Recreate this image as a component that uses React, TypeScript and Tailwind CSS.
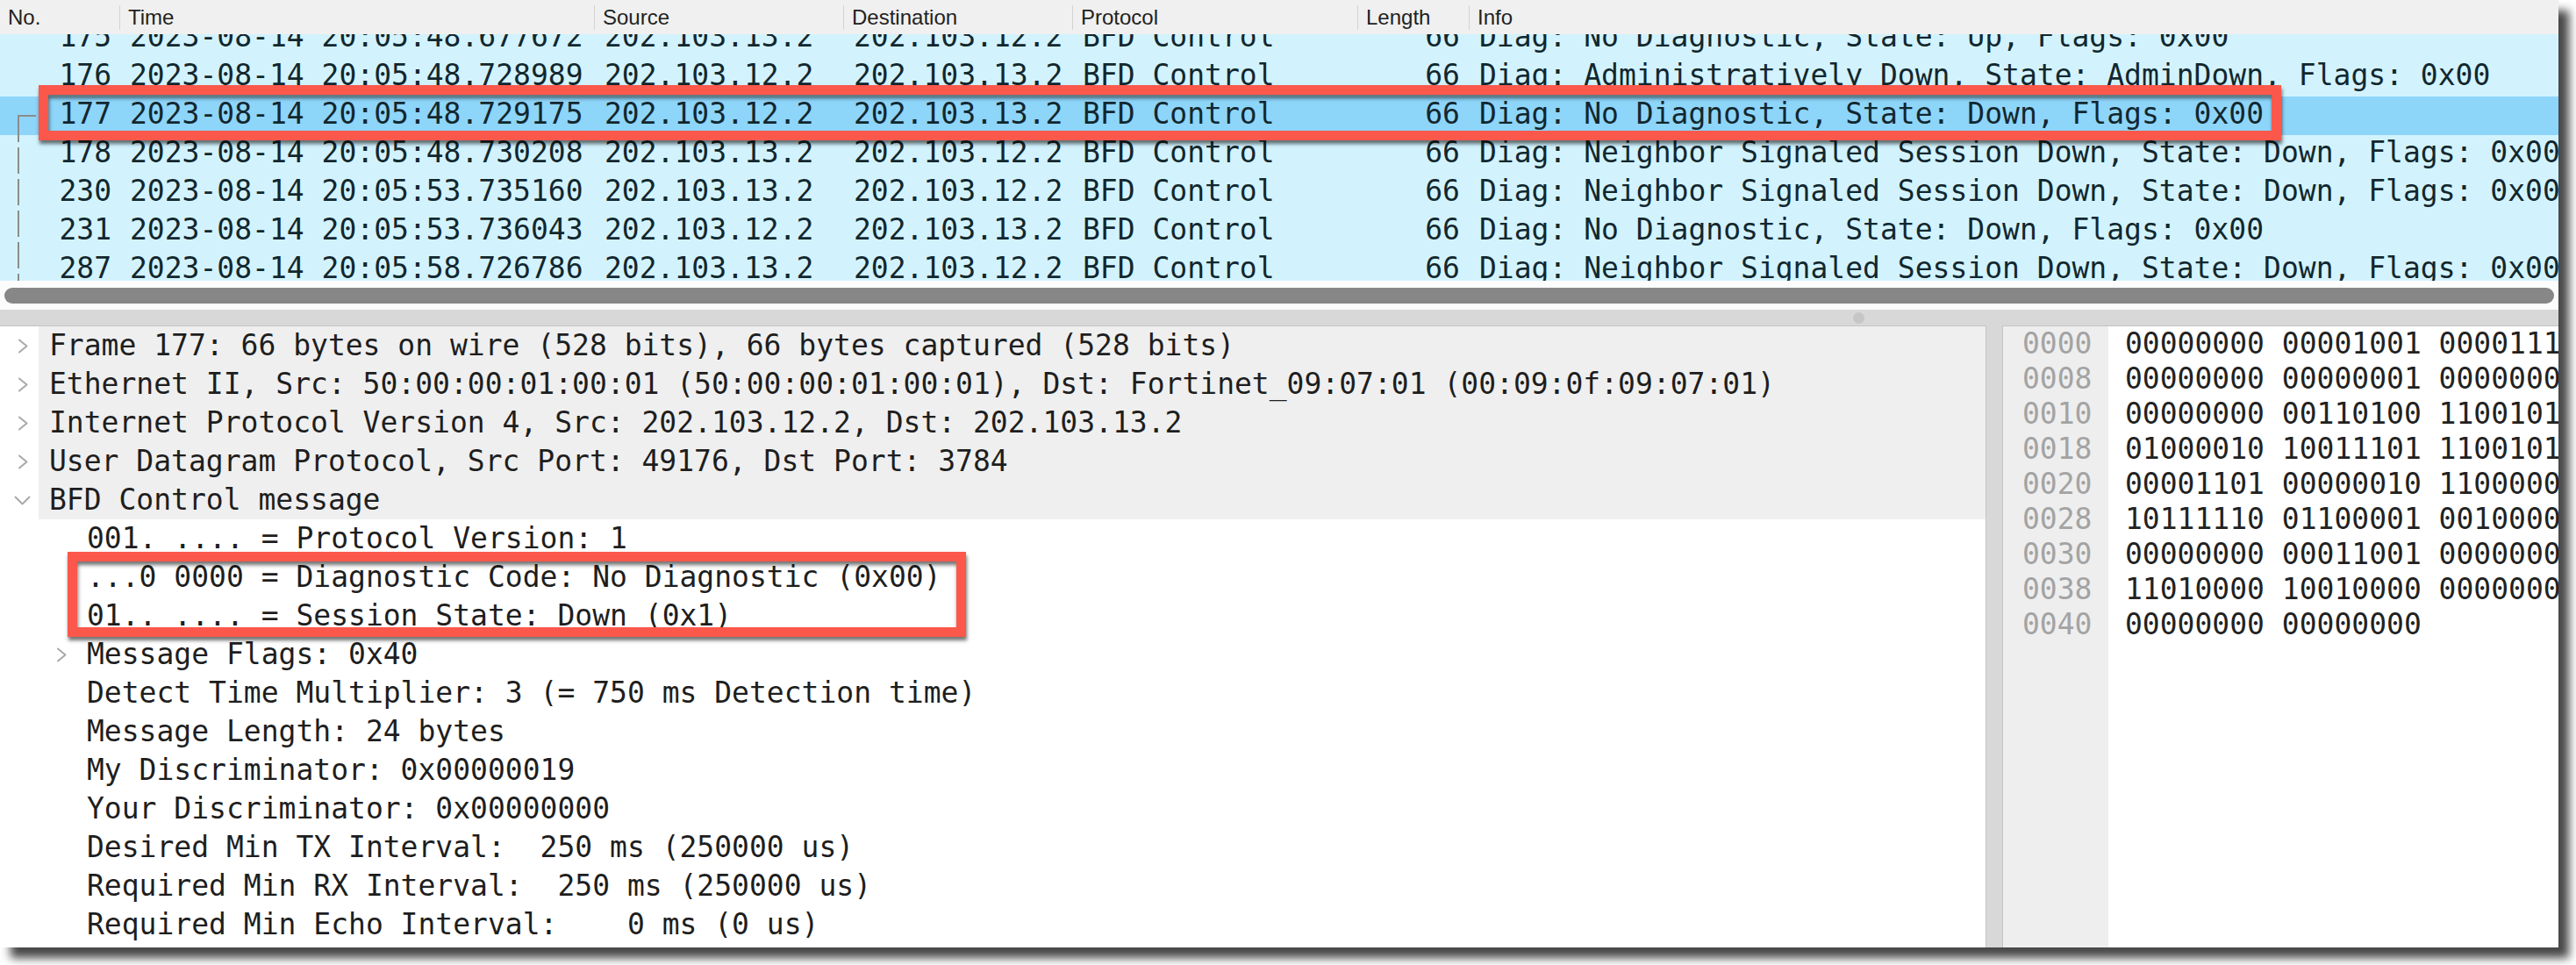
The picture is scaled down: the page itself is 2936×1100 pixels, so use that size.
import React from 'react';

type Packet = {
  no: string;
  time: string;
  src: string;
  dst: string;
  proto: string;
  len: string;
  info: string;
  selected?: boolean;
};

type TreeItem = {
  text: string;
  level: 0 | 1;
  arrow?: 'right' | 'down';
};

const packets: Packet[] = [
  { no: '175', time: '2023-08-14 20:05:48.677672', src: '202.103.13.2', dst: '202.103.12.2', proto: 'BFD Control', len: '66', info: 'Diag: No Diagnostic, State: Up, Flags: 0x00' },
  { no: '176', time: '2023-08-14 20:05:48.728989', src: '202.103.12.2', dst: '202.103.13.2', proto: 'BFD Control', len: '66', info: 'Diag: Administratively Down, State: AdminDown, Flags: 0x00' },
  { no: '177', time: '2023-08-14 20:05:48.729175', src: '202.103.12.2', dst: '202.103.13.2', proto: 'BFD Control', len: '66', info: 'Diag: No Diagnostic, State: Down, Flags: 0x00', selected: true },
  { no: '178', time: '2023-08-14 20:05:48.730208', src: '202.103.13.2', dst: '202.103.12.2', proto: 'BFD Control', len: '66', info: 'Diag: Neighbor Signaled Session Down, State: Down, Flags: 0x00' },
  { no: '230', time: '2023-08-14 20:05:53.735160', src: '202.103.13.2', dst: '202.103.12.2', proto: 'BFD Control', len: '66', info: 'Diag: Neighbor Signaled Session Down, State: Down, Flags: 0x00' },
  { no: '231', time: '2023-08-14 20:05:53.736043', src: '202.103.12.2', dst: '202.103.13.2', proto: 'BFD Control', len: '66', info: 'Diag: No Diagnostic, State: Down, Flags: 0x00' },
  { no: '287', time: '2023-08-14 20:05:58.726786', src: '202.103.13.2', dst: '202.103.12.2', proto: 'BFD Control', len: '66', info: 'Diag: Neighbor Signaled Session Down, State: Down, Flags: 0x00' },
];

const tree: TreeItem[] = [
  { text: 'Frame 177: 66 bytes on wire (528 bits), 66 bytes captured (528 bits)', level: 0, arrow: 'right' },
  { text: 'Ethernet II, Src: 50:00:00:01:00:01 (50:00:00:01:00:01), Dst: Fortinet_09:07:01 (00:09:0f:09:07:01)', level: 0, arrow: 'right' },
  { text: 'Internet Protocol Version 4, Src: 202.103.12.2, Dst: 202.103.13.2', level: 0, arrow: 'right' },
  { text: 'User Datagram Protocol, Src Port: 49176, Dst Port: 3784', level: 0, arrow: 'right' },
  { text: 'BFD Control message', level: 0, arrow: 'down' },
  { text: '001. .... = Protocol Version: 1', level: 1 },
  { text: '...0 0000 = Diagnostic Code: No Diagnostic (0x00)', level: 1 },
  { text: '01.. .... = Session State: Down (0x1)', level: 1 },
  { text: 'Message Flags: 0x40', level: 1, arrow: 'right' },
  { text: 'Detect Time Multiplier: 3 (= 750 ms Detection time)', level: 1 },
  { text: 'Message Length: 24 bytes', level: 1 },
  { text: 'My Discriminator: 0x00000019', level: 1 },
  { text: 'Your Discriminator: 0x00000000', level: 1 },
  { text: 'Desired Min TX Interval:  250 ms (250000 us)', level: 1 },
  { text: 'Required Min RX Interval:  250 ms (250000 us)', level: 1 },
  { text: 'Required Min Echo Interval:    0 ms (0 us)', level: 1 },
];

const bytes: [string, string][] = [
  ['0000', '00000000 00001001 00001111 00001001 00000111 00000001 01010000 00000000'],
  ['0008', '00000000 00000001 00000000 00000001 00001000 00000000 01000101 11000000'],
  ['0010', '00000000 00110100 11001010 01100111 00000000 00000000 11111111 00010001'],
  ['0018', '01000010 10011101 11001010 01100111 00001100 00000010 11001010 01100111'],
  ['0020', '00001101 00000010 11000000 00011000 00001110 11001000 00000000 00100000'],
  ['0028', '10111110 01100001 00100000 01000000 00000011 00011000 00000000 00000000'],
  ['0030', '00000000 00011001 00000000 00000000 00000000 00000000 00000000 00000011'],
  ['0038', '11010000 10010000 00000000 00000011 11010000 10010000 00000000 00000000'],
  ['0040', '00000000 00000000'],
];

const mono = "font-['DejaVu_Sans_Mono','Liberation_Mono',monospace]";

const ChevronRight = () => (
  <svg width="13" height="17" viewBox="0 0 13 17" fill="none">
    <polyline points="2,1.5 10.5,8.5 2,15.5" stroke="#a9a9a9" strokeWidth="2" strokeLinejoin="round" strokeLinecap="round" />
  </svg>
);

const ChevronDown = () => (
  <svg width="19" height="11" viewBox="0 0 19 11" fill="none">
    <polyline points="1.5,1.5 9.5,9.5 17.5,1.5" stroke="#a9a9a9" strokeWidth="2" strokeLinejoin="round" strokeLinecap="round" />
  </svg>
);

const HeaderCell: React.FC<{ label: string; width?: string; first?: boolean }> = ({ label, width, first }) => (
  <div className={`flex items-center ${width ?? 'flex-1'}`}>
    {first ? null : <div className="w-px h-[28px] bg-[#d3d3d3] mr-[9px]" />}
    <span className={first ? 'pl-[9px]' : ''}>{label}</span>
  </div>
);

const PacketRow: React.FC<{ p: Packet }> = ({ p }) => (
  <div className={`flex h-[44px] leading-[40px] whitespace-pre ${p.selected ? 'bg-[#8ed5fa]' : 'bg-[#d2f3fe]'}`}>
    <div className="w-[136px] shrink-0 text-right pr-[9px]">{p.no}</div>
    <div className="w-[541px] shrink-0 pl-3">{p.time}</div>
    <div className="w-[284px] shrink-0 pl-3">{p.src}</div>
    <div className="w-[261px] shrink-0 pl-3">{p.dst}</div>
    <div className="w-[325px] shrink-0 pl-3">{p.proto}</div>
    <div className="w-[127px] shrink-0 text-right pr-[10px]">{p.len}</div>
    <div className="flex-1 min-w-0 pl-3">{p.info}</div>
  </div>
);

const TreeRow: React.FC<{ item: TreeItem }> = ({ item }) => {
  if (item.level === 0) {
    return (
      <div className="flex h-[44px]">
        <div className="w-[44px] shrink-0 flex items-center pl-[16px]">
          {item.arrow === 'down' ? <ChevronDown /> : <div className="pl-[4px]"><ChevronRight /></div>}
        </div>
        <div className="flex-1 bg-[#efefef] pl-[12px] leading-[43px] whitespace-pre">{item.text}</div>
      </div>
    );
  }
  return (
    <div className="flex h-[44px]">
      <div className="w-[99px] shrink-0 flex items-center pl-[64px]">
        {item.arrow === 'right' ? <ChevronRight /> : null}
      </div>
      <div className="flex-1 leading-[43px] whitespace-pre">{item.text}</div>
    </div>
  );
};

const RedBox: React.FC<{ className: string }> = ({ className }) => (
  <div
    className={`absolute border-[11px] border-[#fb584b] shadow-[1px_4px_4px_rgba(0,0,0,0.55),inset_1px_4px_4px_rgba(0,0,0,0.55)] ${className}`}
  />
);

export default function App() {
  return (
    <div className="w-[2936px] h-[1100px] bg-white overflow-hidden">
      <div className="relative w-[2916px] h-[1080px] bg-white flex flex-col shadow-[12px_12px_10px_rgba(0,0,0,0.72)]">
        {/* packet list header */}
        <div className="flex h-[39px] shrink-0 bg-[#f0f0f0] text-[24px] leading-[39px] text-[#222] font-['Liberation_Sans',Arial,sans-serif]">
          <HeaderCell label="No." width="w-[136px]" first />
          <HeaderCell label="Time" width="w-[541px]" />
          <HeaderCell label="Source" width="w-[284px]" />
          <HeaderCell label="Destination" width="w-[261px]" />
          <HeaderCell label="Protocol" width="w-[325px]" />
          <HeaderCell label="Length" width="w-[127px]" />
          <HeaderCell label="Info" />
        </div>

        {/* packet list, scrolled so that row 175 sits partly under the header */}
        <div className={`relative h-[281px] shrink-0 overflow-hidden bg-[#d2f3fe] text-[33px] text-[#12272e] ${mono}`}>
          <div className="-mt-[17px]">
            {packets.map((p) => (
              <PacketRow key={p.no} p={p} />
            ))}
          </div>
          <svg className="absolute left-0 top-0" width="44" height="281" viewBox="0 0 44 281">
            <polyline points="41,93 21,93 21,100" fill="none" stroke="#8c8c8c" strokeWidth="2" />
            <line x1="21" y1="93" x2="21" y2="281" stroke="#8c8c8c" strokeWidth="2" strokeDasharray="30 6" />
          </svg>
        </div>

        {/* horizontal scrollbar */}
        <div className="h-[33px] shrink-0 bg-[#fcfcfc] pt-[8px] px-[5px]">
          <div className="h-[18px] rounded-full bg-[#878787]" />
        </div>

        {/* splitter */}
        <div className="h-[18px] shrink-0 bg-[#d8d8d8] flex items-center pl-[2112px]">
          <div className="w-[13px] h-[13px] rounded-full bg-[#c6c6c6]" />
        </div>

        {/* details + bytes */}
        <div className={`flex flex-1 min-h-0 text-[33px] ${mono}`}>
          <div className="w-[2264px] shrink-0 border-t border-r border-[#c4c4c4] bg-white text-[#1e1e1e] overflow-hidden">
            {tree.map((item, i) => (
              <TreeRow key={i} item={item} />
            ))}
          </div>
          <div className="w-[18px] shrink-0 bg-[#d8d8d8]" />
          <div className="flex flex-1 min-w-0 border-t border-l border-[#c4c4c4] overflow-hidden">
            <div className="w-[120px] shrink-0 bg-[#eeeeee] text-[#a3a3a3] pl-[22px]">
              {bytes.map(([off]) => (
                <div key={off} className="h-[40px] leading-[40px]">{off}</div>
              ))}
            </div>
            <div className="flex-1 min-w-0 bg-white text-[#222] pl-[19px]">
              {bytes.map(([off, b]) => (
                <div key={off} className="h-[40px] leading-[40px] whitespace-pre">{b}</div>
              ))}
            </div>
          </div>
        </div>

        {/* annotation boxes */}
        <RedBox className="left-[44px] top-[97px] w-[2556px] h-[63px]" />
        <RedBox className="left-[77px] top-[629px] w-[1024px] h-[97px]" />
      </div>
    </div>
  );
}
